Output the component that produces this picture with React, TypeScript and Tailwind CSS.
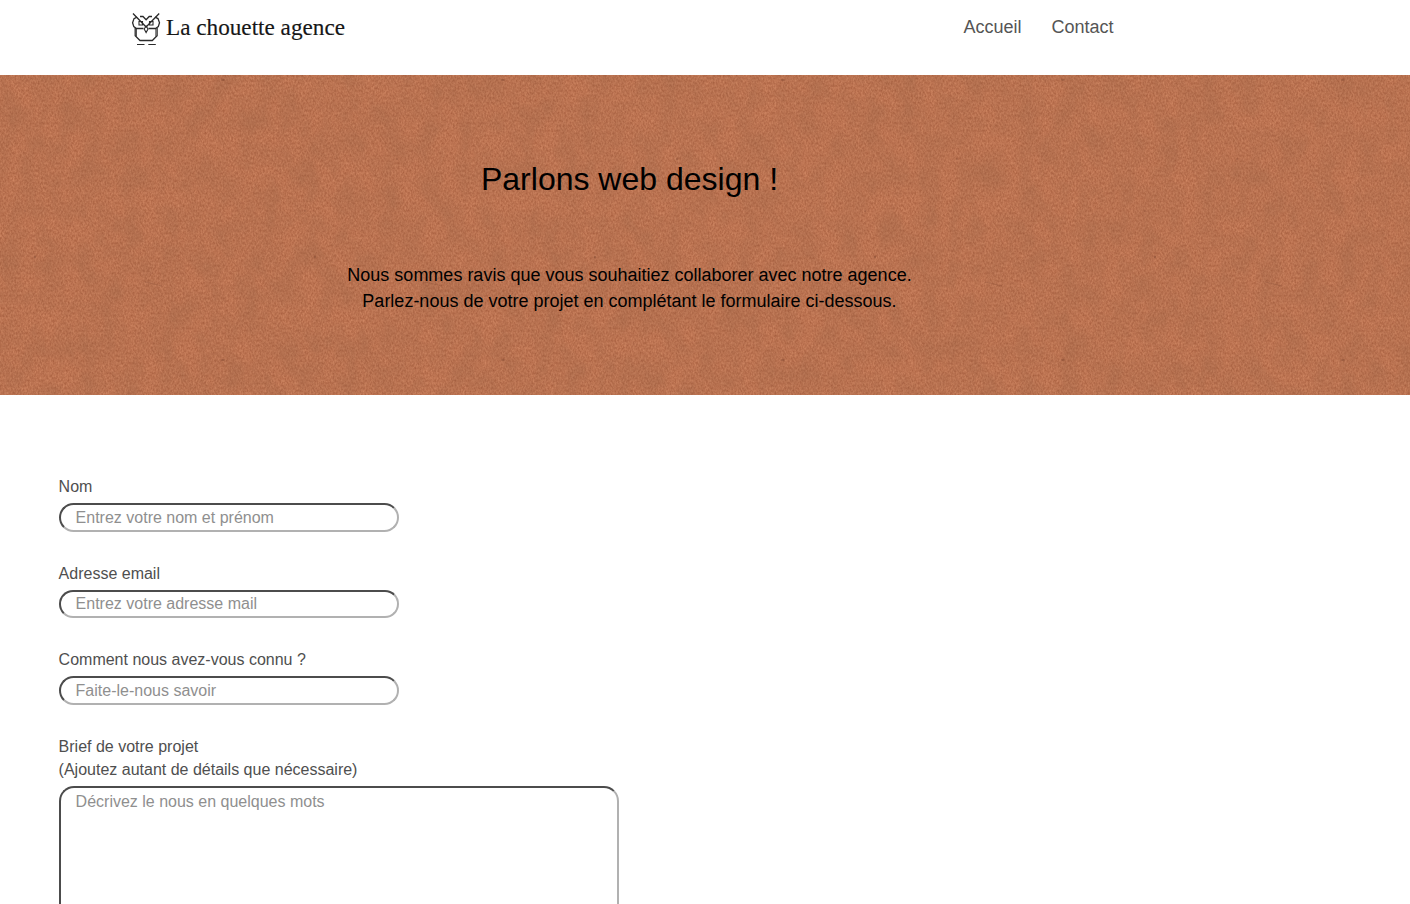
import React from 'react';

function Owl() {
  return (
    <svg viewBox="0 0 32 36" className="h-9 w-8 shrink-0" fill="none" stroke="#2a2a2a" strokeWidth="1.3" aria-hidden="true">
      <path d="M3 2.5L16.1 16L29.2 2.5" />
      <path d="M7 6.2L4 7.6L2.6 11.7L3.8 15.6L6.5 17.5H13.5M10 5.5H13L16.1 8.8L19.2 5.5H22M25 6.2L28 7.6L29.5 11.7L28.3 15.6L25.5 17.5H18.5" />
      <path d="M9 10.5H12.5V14H9ZM19.5 10.5H23V14H19.5ZM16.1 15L14.2 18L16.1 21.5L18 18Z" strokeWidth="1.1" />
      <path d="M5.2 17V24.7L10 29.5H22.3L27.1 24.7V17" />
      <path d="M6.5 18V25.5M25.8 18V25.5" strokeWidth="0.8" />
      <path d="M7 33.5H14.5M18.3 33.5H25.8" strokeWidth="1.1" />
    </svg>
  );
}

function Texture() {
  return (
    <svg className="absolute inset-0 h-full w-full" aria-hidden="true">
      <defs>
        <filter id="grain" x="0" y="0" width="100%" height="100%" colorInterpolationFilters="sRGB">
          <feTurbulence type="fractalNoise" baseFrequency="0.6 0.4" numOctaves={2} seed={7} />
          <feColorMatrix values="0.2 0 0 0 0.639  0.2 0 0 0 0.353  0.18 0 0 0 0.23  0 0 0 0 1" />
        </filter>
        <filter id="cloud" x="0" y="0" width="100%" height="100%" colorInterpolationFilters="sRGB">
          <feTurbulence type="fractalNoise" baseFrequency="0.05 0.035" numOctaves={5} seed={3} />
          <feColorMatrix values="0 0 0 0 0.58  0 0 0 0 0.38  0 0 0 0 0.27  0.5 0 0 0 -0.14" />
        </filter>
        <pattern id="flecks" width="280" height="280" patternUnits="userSpaceOnUse">
          <g fill="#783f2a" fillOpacity="0.6">
            <ellipse cx="35" cy="182" rx="0.8" ry="1.5" />
            <ellipse cx="117" cy="84" rx="0.8" ry="0.8" />
            <ellipse cx="223" cy="5" rx="2" ry="0.8" />
            <ellipse cx="25" cy="136" rx="0.6" ry="0.8" />
          </g>
          <path d="M145 207L162 211" stroke="#8a4c34" strokeOpacity="0.5" strokeWidth="0.7" />
        </pattern>
      </defs>
      <rect width="100%" height="100%" filter="url(#grain)" />
      <rect width="100%" height="100%" filter="url(#cloud)" />
      <rect width="100%" height="100%" fill="url(#flecks)" />
    </svg>
  );
}

const fields = [
  { id: 'nom', label: 'Nom', placeholder: 'Entrez votre nom et prénom', box: 'h-[87px]', input: 'h-[29px]' },
  { id: 'email', label: 'Adresse email', placeholder: 'Entrez votre adresse mail', box: 'h-[86px]', input: 'h-[28px]' },
  { id: 'source', label: 'Comment nous avez-vous connu ?', placeholder: 'Faite-le-nous savoir', box: 'h-[87px]', input: 'h-[29px]' },
];

export default function App() {
  return (
    <div className="h-[904px] overflow-hidden bg-white font-['Liberation_Sans',Arial,sans-serif] text-[#4f4f4f]">
      <header className="flex h-[75px] items-start justify-between pr-[296.5px] pl-[130px]">
        <a href="#" className="flex pt-[11px]">
          <Owl />
          <svg className="ml-1 h-9 w-[184px]" role="img" aria-label="La chouette agence">
            <text x="0" y="24" textLength="179" lengthAdjust="spacingAndGlyphs" fill="#171717" stroke="#171717" strokeWidth="0.15" className="font-['Liberation_Serif',serif] text-[23px]">La chouette agence</text>
          </svg>
        </a>
        <nav className="flex gap-[30px] pt-[14px] text-[18px] leading-[26px] text-[#555]">
          <a href="#">Accueil</a>
          <a href="#">Contact</a>
        </nav>
      </header>
      <section className="relative h-[320px] bg-[#bd7350] text-black">
        <Texture />
        <div className="relative w-[1259px] pt-[84px] text-center">
          <h1 className="text-[32px] leading-[40px]">Parlons web design !</h1>
          <p className="pt-[63px] text-[18px] leading-[26px]">
            Nous sommes ravis que vous souhaitiez collaborer avec notre agence.<br />
            Parlez-nous de votre projet en complétant le formulaire ci-dessous.
          </p>
        </div>
      </section>
      <form className="flex flex-col pt-[80px] pl-[58.6px] text-[16px] leading-[23px]">
        {fields.map((f) => (
          <div key={f.id} className={`flex flex-col ${f.box}`}>
            <label htmlFor={f.id}>{f.label}</label>
            <input id={f.id} placeholder={f.placeholder} className={`mt-[5px] w-[340px] rounded-[15px] border-2 border-t-[#4c4c4c] border-r-[#b1b1b1] border-b-[#b1b1b1] border-l-[#4c4c4c] px-[15px] placeholder:text-[#8f8f8f] ${f.input}`} />
          </div>
        ))}
        <label htmlFor="brief">Brief de votre projet<br />(Ajoutez autant de détails que nécessaire)</label>
        <textarea id="brief" placeholder="Décrivez le nous en quelques mots" className="mt-[5px] h-[200px] w-[560px] shrink-0 resize-none rounded-[15px] border-2 border-t-[#4c4c4c] border-r-[#b1b1b1] border-b-[#b1b1b1] border-l-[#4c4c4c] px-[15px] py-[2px] placeholder:text-[#8f8f8f]" />
      </form>
    </div>
  );
}
